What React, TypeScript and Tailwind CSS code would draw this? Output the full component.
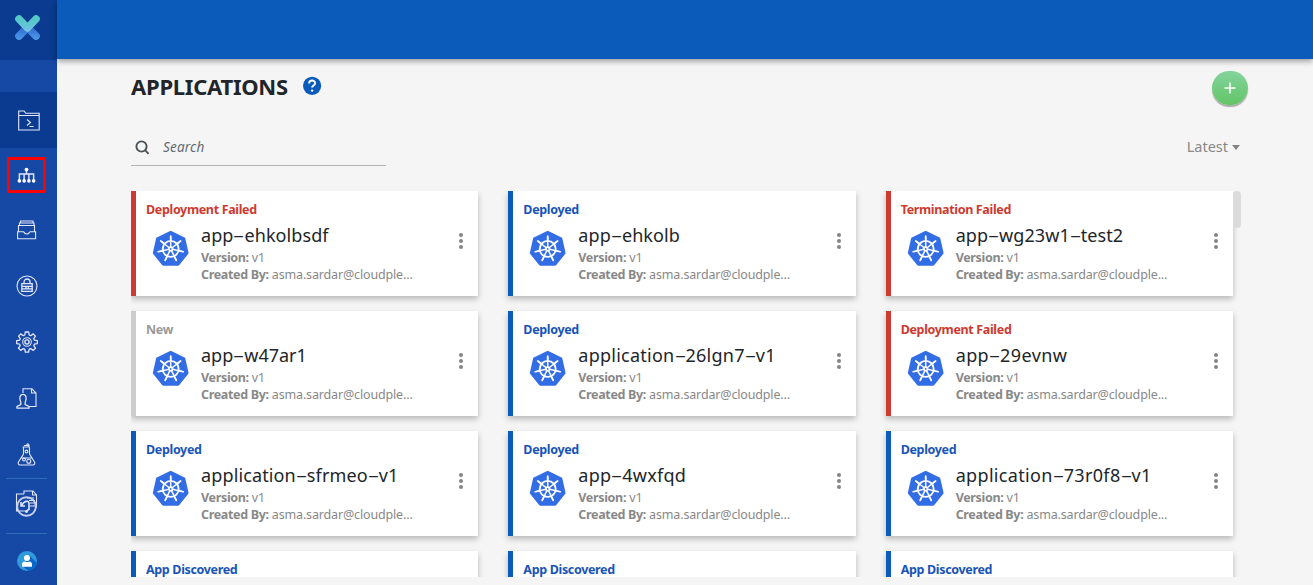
import React from "react";

type Status = "failed" | "ok" | "new";
type AppCard = { id: number; status: string; kind: Status; name?: string; tracking?: string };

const cards: AppCard[] = [
  { id: 1, status: "Deployment Failed", kind: "failed", name: "app-ehkolbsdf", tracking: "tracking-[0.08px]" },
  { id: 2, status: "Deployed", kind: "ok", name: "app-ehkolb", tracking: "tracking-[0.1px]" },
  { id: 3, status: "Termination Failed", kind: "failed", name: "app-wg23w1-test2", tracking: "tracking-[0.07px]" },
  { id: 4, status: "New", kind: "new", name: "app-w47ar1", tracking: "tracking-[0px]" },
  { id: 5, status: "Deployed", kind: "ok", name: "application-26lgn7-v1", tracking: "tracking-[0.25px]" },
  { id: 6, status: "Deployment Failed", kind: "failed", name: "app-29evnw", tracking: "tracking-[0.4px]" },
  { id: 7, status: "Deployed", kind: "ok", name: "application-sfrmeo-v1", tracking: "tracking-[0.13px]" },
  { id: 8, status: "Deployed", kind: "ok", name: "app-4wxfqd", tracking: "tracking-[0.25px]" },
  { id: 9, status: "Deployed", kind: "ok", name: "application-73r0f8-v1", tracking: "tracking-[0.33px]" },
  { id: 10, status: "App Discovered", kind: "ok" },
  { id: 11, status: "App Discovered", kind: "ok" },
  { id: 12, status: "App Discovered", kind: "ok" },
];

const borderFor: Record<Status, string> = {
  failed: "border-[#cd3a2f]",
  ok: "border-[#0b5cba]",
  new: "border-[#cccccc]",
};
const textFor: Record<Status, string> = {
  failed: "text-[#cd3a2f]",
  ok: "text-[#1854b8]",
  new: "text-[#9a9a9a]",
};

function Name({ text }: { text: string }) {
  return (
    <>
      {text.split(/(-)/).map((part, i) =>
        part === "-" ? (
          <span key={i} className="inline-block w-[11px] scale-x-[2] text-center tracking-normal">-</span>
        ) : (
          <span key={i}>{part}</span>
        ),
      )}
    </>
  );
}

const spokes = [0, 1, 2, 3, 4, 5, 6].map((i) => (i * 360) / 7);

function Kubernetes() {
  return (
    <svg className="ml-[6px] mt-[12px] shrink-0" width="38" height="38" viewBox="0 0 38 38">
      <path
        d="M19 2.200 32.300 8.600 35.570 22.980 26.380 34.500H11.620L2.430 22.980 5.700 8.600z"
        transform="translate(-.3 0)"
        fill="#326de6" stroke="#326de6" strokeWidth="2.600" strokeLinejoin="round"
      />
      <g fill="none" stroke="#fff" transform="translate(-.3 0)">
        <circle cx="19" cy="18.900" r="8" strokeWidth="1.900" />
        {spokes.map((deg) => (
          <g key={deg} transform={`rotate(${deg} 19 18.900)`}>
            <path d="M19 17V6.600" strokeWidth="1.500" />
            <path d="M19 9.500V6.100" strokeWidth="1.700" strokeLinecap="round" />
          </g>
        ))}
        <circle cx="19" cy="18.900" r="2.300" fill="#fff" strokeWidth=".8" />
        <circle cx="19" cy="18.900" r=".9" fill="#326de6" stroke="none" />
      </g>
    </svg>
  );
}

function Card({ card }: { card: AppCard }) {
  return (
    <article className={`flex h-[105px] flex-col border-l-[5px] bg-white pl-[10px] pt-[10px] shadow-[0_3px_6px_rgba(0,0,0,0.25)] ${borderFor[card.kind]}`}>
      <div className={`h-[17px] text-[12.5px] font-bold leading-[18px] tracking-[-0.34px] ${textFor[card.kind]}`}>{card.status}</div>
      {card.name && (
        <div className="flex">
          <Kubernetes />
          <div className="ml-[11px] flex-1 whitespace-nowrap text-[12.5px] leading-[17px] tracking-[-0.15px] text-[#888]">
            <h2 className={`mt-[5px] h-[26px] text-[18px] leading-[24px] text-[#212529] ${card.tracking}`}><Name text={card.name} /></h2>
            <p><b className="tracking-[-0.33px]">Version:</b> v1</p>
            <p><b className="tracking-[-0.33px]">Created By:</b> asma.sardar@cloudple...</p>
          </div>
          <div className="mr-[15px] mt-[15px] flex flex-col gap-[2px]">
            <i className="h-1 w-1 rounded-full bg-[#858585]" />
            <i className="h-1 w-1 rounded-full bg-[#858585]" />
            <i className="h-1 w-1 rounded-full bg-[#858585]" />
          </div>
        </div>
      )}
    </article>
  );
}

const stroke = { fill: "none", stroke: "#e4e6fa", strokeWidth: 1.1 } as const;

function Logo() {
  return (
    <svg width="27" height="27" viewBox="0 0 27 27">
      <defs>
        <linearGradient id="down" gradientUnits="userSpaceOnUse" x1="0" y1="12" x2="0" y2="26">
          <stop offset="0" stopColor="#2a66cc" />
          <stop offset="1" stopColor="#4f9bea" />
        </linearGradient>
        <linearGradient id="up" gradientUnits="userSpaceOnUse" x1="0" y1="1" x2="0" y2="19">
          <stop offset="0" stopColor="#50cbc0" />
          <stop offset="0.55" stopColor="#5fc5d4" />
          <stop offset="1" stopColor="#82bdf0" />
        </linearGradient>
      </defs>
      <path d="M5 22 13.500 13.500 22 22" fill="none" stroke="url(#down)" strokeWidth="7.600" strokeLinecap="round" strokeLinejoin="round" />
      <path d="M5 5 13.500 14 22 5" fill="none" stroke="url(#up)" strokeWidth="7.600" strokeLinecap="round" strokeLinejoin="round" />
    </svg>
  );
}

function Terminal() {
  return (
    <svg width="22" height="21" viewBox="0 0 22 21" {...stroke}>
      <path d="M.7 20V1h5.500l1.500 2.200h13.500V20z" />
      <path d="M.7 5.500h20.500M9 9.500l3.500 3-3.500 3M11.500 16.500h4" />
    </svg>
  );
}
function Tree() {
  return (
    <svg width="19" height="17" viewBox="0 0 20 17" {...stroke}>
      <path d="M10 2v5M2.500 14V7h15v7M7.500 7v7M12.500 7v7" strokeWidth="1.500" />
      <g fill="#fff" stroke="none">
        <circle cx="10" cy="2.300" r="2" /><circle cx="2.500" cy="14.200" r="1.900" /><circle cx="7.500" cy="14.200" r="1.900" /><circle cx="12.500" cy="14.200" r="1.900" /><circle cx="17.500" cy="14.200" r="1.900" />
      </g>
    </svg>
  );
}
function Inbox() {
  return (
    <svg width="20" height="20" viewBox="0 0 20 20" {...stroke}>
      <path d="M3.500 3V1h12.500v2M2.500 5.500V3h14.500v2.500M1.500 11.500V5.500h16v6M.6 11.800h5.900c.7 0 .7 2.200 3.300 2.200s2.600-2.200 3.300-2.200h5.500v7H.6z" />
    </svg>
  );
}
function Lock() {
  return (
    <svg width="22" height="22" viewBox="0 0 22 22" {...stroke}>
      <circle cx="11" cy="11" r="10" />
      <path d="M5.800 8.700h10.400v7.700H5.800zM8 8.500V7a3 3 0 0 1 6 0v1.500M6 11.300h10M6 13.900h10M10 11.500v2.500M12.300 11.500v2.500" strokeWidth="1.300" />
    </svg>
  );
}
function Gear() {
  return (
    <svg width="22" height="22" viewBox="0 0 22 22" {...stroke}>
      <path d="M9.300 1h3.400l.5 3 1.500.7 2.600-1.800 2.100 2.200-1.600 2.600.6 1.500 2.900.4v3l-2.900.6-.6 1.400 1.700 2.600-2.200 2.200-2.600-1.800-1.500.6-.6 3H9.300l-.5-3-1.500-.6-2.600 1.800-2.200-2.200 1.700-2.600-.6-1.400-2.900-.6v-3l2.900-.4.600-1.500-1.600-2.600 2.100-2.200 2.600 1.800 1.500-.7z" strokeLinejoin="round" strokeWidth="1.300" />
      <circle cx="11" cy="11" r="4.300" /><circle cx="11" cy="11" r="2.100" strokeWidth="1.400" />
    </svg>
  );
}
function UserDoc() {
  return (
    <svg width="21" height="21" viewBox="0 0 21 21" {...stroke}>
      <path d="M7 5V.8h9L20 5v13.500h-7M15.500.8V5H20" />
      <path d="M4.800 14.500C2.800 10 4 6.300 7 6.300s4.200 3.700 2.200 8.200M4.800 14v2.500L1 18.300v1.900h12v-1.900l-3.800-1.800V14" strokeWidth="1.300" />
    </svg>
  );
}
function Flask() {
  return (
    <svg width="19" height="23" viewBox="0 0 19 23" {...stroke}>
      <path d="M5.500 4h7M6.500 4.200V11L1.500 19c-.8 1.500 0 3 1.500 3h13c1.500 0 2.300-1.500 1.500-3l-5-8V4.200M7 2.500h5v1.500M3.500 15h12" />
      <circle cx="7" cy="16.500" r="1.400" /><circle cx="11.800" cy="18.300" r="2" /><circle cx="9.500" cy="8.500" r="1.400" /><circle cx="10.800" cy="1.700" r="1" />
    </svg>
  );
}
function Reports() {
  return (
    <svg width="23" height="27" viewBox="0 0 23 27" {...stroke}>
      <path d="M9 4V1h9l3.500 4v12.500M17.500 1v4h4M9 4H1.500v17H10M12 8h7M14 10.500h6M15 13h6M15 16h6" />
      <circle cx="11.500" cy="16.500" r="9.300" strokeWidth="1.900" stroke="#c9cef0" />
      <path d="M6 12v4h4M7 15c2-4 6-5 7-2v6.500l-2 1" strokeWidth="1.600" />
      <circle cx="11.500" cy="21.500" r=".9" fill="#fff" />
    </svg>
  );
}
function Avatar() {
  return (
    <svg width="20" height="20" viewBox="0 0 20 20">
      <circle cx="10" cy="10" r="10" fill="#309bdc" />
      <path d="M12.500 4.500 19.800 11.800A10 10 0 0 1 11.500 19.900L6 15.500z" fill="#0b66c9" />
      <circle cx="10" cy="7" r="3" fill="#fff" />
      <path d="M5 15.800v-2.300c0-2.200 1.300-3 3-3 1.300.8 2.700.8 4 0 1.700 0 3 .8 3 3v2.300z" fill="#fff" />
    </svg>
  );
}

function Sidebar() {
  const slot = "flex h-[56px] shrink-0 items-center justify-center pr-[4px]";
  return (
    <nav className="flex h-full w-[57px] shrink-0 flex-col bg-[#1648a5]">
      <div className="flex h-[60px] shrink-0 items-center justify-center bg-[#0a3b90] pb-[5px] pr-[2px]"><Logo /></div>
      <div className="h-[32px] shrink-0" />
      <div className="flex h-[56px] shrink-0 items-center justify-center bg-[#0a3b90]"><Terminal /></div>
      <div className="flex h-[54px] shrink-0 items-center justify-center pr-[4px]">
        <div className="flex h-[36px] w-[39px] items-center justify-center border-[3px] border-[#fd0004]"><Tree /></div>
      </div>
      <div className={slot}><Inbox /></div>
      <div className={slot}><Lock /></div>
      <div className={slot}><Gear /></div>
      <div className={slot}><UserDoc /></div>
      <div className="mx-[6px] flex h-[53px] w-[41px] shrink-0 items-center justify-center border-b border-[#2f6db6] pt-[4px]"><Flask /></div>
      <div className="mx-[6px] flex h-[55px] w-[41px] shrink-0 items-center justify-center border-b border-[#2f6db6] pb-[5px]"><Reports /></div>
      <div className="flex h-[52px] items-center justify-center pb-px pr-[3px] pt-[3px]"><Avatar /></div>
    </nav>
  );
}

export default function App() {
  return (
    <div className="flex h-[585px] w-[1313px] overflow-hidden bg-[#f5f5f5] font-['Noto_Sans','Open_Sans',sans-serif]">
      <Sidebar />
      <div className="flex min-w-0 flex-1 flex-col">
        <header className="h-[59px] shrink-0 bg-[#0b5cba] shadow-[0_2px_6px_rgba(0,0,0,0.4)]" />
        <main className="flex flex-1 flex-col pl-[74px]">
          <div className="flex h-[70px] items-start">
            <h1 className="mt-[11px] w-[161px] whitespace-nowrap text-[22px] font-bold leading-[32px] tracking-[-0.25px] text-[#212529]">APPLICATIONS</h1>
            <svg className="ml-[11px] mt-[17px]" width="19" height="19" viewBox="0 0 19 19">
              <circle cx="9.100" cy="9.800" r="9.100" fill="#0b5cba" />
              <path d="M6.100 7.600c0-4 6-4 6-.3 0 2.300-3 2.200-3 4.300" fill="none" stroke="#fff" strokeWidth="1.900" />
              <circle cx="9.100" cy="14.600" r="1.200" fill="#fff" />
            </svg>
            <button className="ml-[890px] mt-[12px] flex h-[34px] w-[36px] items-center justify-center rounded-full bg-linear-to-b from-[#83d49c] to-[#62c466] shadow-[0_2px_1px_rgba(0,0,0,0.3)]">
              <svg width="12" height="12" viewBox="0 0 12 12"><path d="M6 .5v11M.5 6h11" stroke="#fff" strokeWidth="1.500" /></svg>
            </button>
          </div>
          <div className="flex h-[62px] justify-between pr-[73px]">
            <div className="flex h-[37px] w-[255px] items-center border-b border-[#b3b3b3] pl-[4px]">
              <svg width="15" height="15" viewBox="0 0 15 15" fill="none" stroke="#485258" strokeWidth="1.900"><circle cx="6.500" cy="6.500" r="5.100" /><path d="m9.800 9.800 3.800 4" /></svg>
              <span className="ml-[13px] pt-px text-[13.5px] italic tracking-[0.2px] text-[#626b70]">Search</span>
            </div>
            <div className="flex h-[36px] items-center text-[14.5px] text-[#888]">Latest<i className="ml-[4px] border-x-[4.5px] border-t-[5px] border-x-transparent border-t-[#858585]" /></div>
          </div>
          <div className="flex h-[386px] w-[1110px] overflow-hidden">
            <div className="grid w-[1102px] shrink-0 grid-cols-3 content-start gap-x-[30px] gap-y-[15px]">
              {cards.map((card) => <Card key={card.id} card={card} />)}
            </div>
            <div className="h-[37px] w-[8px] rounded-[4px] bg-[#dbdbdb]" />
          </div>
        </main>
      </div>
    </div>
  );
}
